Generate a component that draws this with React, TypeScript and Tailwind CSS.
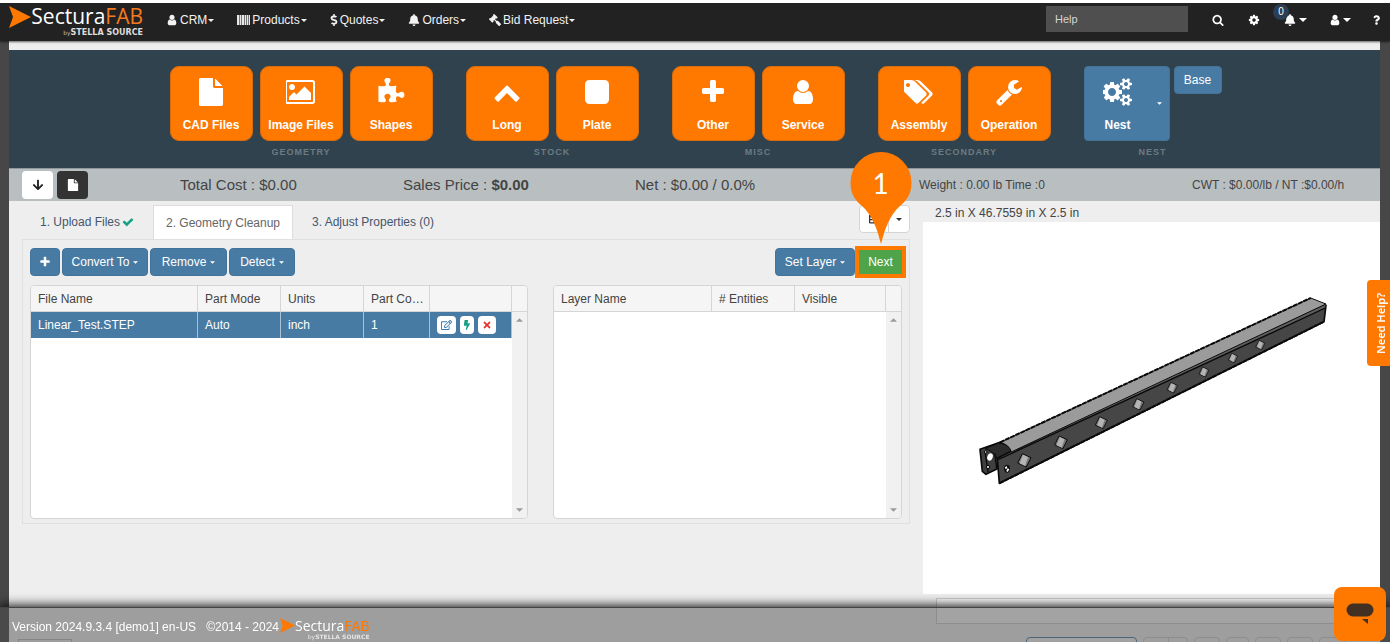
import React from "react";
import {
  FaArrowDown,
  FaBell,
  FaBolt,
  FaDollarSign,
  FaGavel,
  FaQuestion,
  FaRegEdit,
  FaTable,
  FaTimes,
} from "react-icons/fa";

const PATHS = {
  plus: "M1600 736v192q0 40-28 68t-68 28h-416v416q0 40-28 68t-68 28h-192q-40 0-68-28t-28-68v-416h-416q-40 0-68-28t-28-68v-192q0-40 28-68t68-28h416v-416q0-40 28-68t68-28h192q40 0 68 28t28 68v416h416q40 0 68 28t28 68z",
  user: "M1536 1399q0 109-62.5 187t-150.5 78h-854q-88 0-150.5-78t-62.5-187q0-85 8.5-160.5t31.5-152 58.5-131 94-89 134.5-34.5q131 128 313 128t313-128q76 0 134.5 34.5t94 89 58.5 131 31.5 152 8.5 160.5zm-256-887q0 159-112.5 271.5t-271.5 112.5-271.5-112.5-112.5-271.5 112.5-271.5 271.5-112.5 271.5 112.5 112.5 271.5z",
  check:
    "M1671 566q0 40-28 68l-724 724-136 136q-28 28-68 28t-68-28l-136-136-362-362q-28-28-28-68t28-68l136-136q28-28 68-28t68 28l294 295 656-657q28-28 68-28t68 28l136 136q28 28 28 68z",
  search:
    "M1216 832q0-185-131.5-316.5t-316.5-131.5-316.5 131.5-131.5 316.5 131.5 316.5 316.5 131.5 316.5-131.5 131.5-316.5zm512 832q0 52-38 90t-90 38q-54 0-90-38l-343-342q-179 124-399 124-143 0-273.5-55.5t-225-150-150-225-55.5-273.5 55.5-273.5 150-225 225-150 273.5-55.5 273.5 55.5 225 150 150 225 55.5 273.5q0 220-124 399l343 343q37 37 37 90z",
  cog: "M1152 896q0-106-75-181t-181-75-181 75-75 181 75 181 181 75 181-75 75-181zm512-109v222q0 12-8 23t-20 13l-185 28q-19 54-39 91 35 50 107 138 10 12 10 25t-9 23q-27 37-99 108t-94 71q-12 0-26-9l-138-108q-44 23-91 38-16 136-29 186-7 28-36 28h-222q-14 0-24.5-8.5t-11.5-21.5l-28-184q-49-16-90-37l-141 107q-10 9-25 9-14 0-25-11-126-114-165-168-7-10-7-23 0-12 8-23 15-21 51-66.5t54-70.5q-27-50-41-99l-183-27q-13-2-21-12.5t-8-23.5v-222q0-12 8-23t19-13l186-28q14-46 39-92-40-57-107-138-10-12-10-24 0-10 9-23 26-36 98.5-107.5t94.5-71.5q13 0 26 10l138 107q44-23 91-38 16-136 29-186 7-28 36-28h222q14 0 24.5 8.5t11.5 21.5l28 184q49 16 90 37l142-107q9-9 24-9 13 0 25 10 129 119 165 170 7 8 7 22 0 12-8 23-15 21-51 66.5t-54 70.5q26 50 41 98l183 28q13 2 21 12.5t8 23.5z",
  wrench:
    "M448 1472q0-26-19-45t-45-19-45 19-19 45 19 45 45 19 45-19 19-45zm644-420l-682 682q-37 37-90 37-52 0-91-37l-106-108q-38-36-38-90 0-53 38-91l681-681q39 98 114.5 173.5t173.5 114.5zm634-435q0 39-23 106-47 134-164.5 217.5t-258.5 83.5q-185 0-316.5-131.5t-131.5-316.5 131.5-316.5 316.5-131.5q58 0 121.5 16.5t107.5 46.5q16 11 16 28t-16 28l-293 169v224l193 107q5-3 79-48.5t135.5-81 70.5-35.5q15 0 23.5 10t8.5 25z",
  tags: "M384 448q0-53-37.5-90.5t-90.5-37.5-90.5 37.5-37.5 90.5 37.5 90.5 90.5 37.5 90.5-37.5 37.5-90.5zm1067 576q0 53-37 90l-491 492q-39 37-91 37-53 0-90-37l-715-716q-38-37-64.5-101t-26.5-117v-416q0-52 38-90t90-38h416q53 0 117 26.5t102 64.5l715 714q37 39 37 91zm384 0q0 53-37 90l-491 492q-39 37-91 37-36 0-59-14t-53-45l470-470q37-37 37-90 0-52-37-91l-715-714q-38-38-102-64.5t-117-26.5h224q53 0 117 26.5t102 64.5l715 714q37 39 37 91z",
  file: "M1152 512v-472q22 14 36 28l408 408q14 14 28 36h-472zm-128 32q0 40 28 68t68 28h544v1056q0 40-28 68t-68 28h-1344q-40 0-68-28t-28-68v-1600q0-40 28-68t68-28h800v544z",
  image:
    "M576 576q0 80-56 136t-136 56-136-56-56-136 56-136 136-56 136 56 56 136zm1024 384v448h-1408v-192l320-320 160 160 512-512zm96-704h-1600q-13 0-22.5 9.5t-9.5 22.5v1216q0 13 9.5 22.5t22.5 9.5h1600q13 0 22.5-9.5t9.5-22.5v-1216q0-13-9.5-22.5t-22.5-9.5zm160 32v1216q0 66-47 113t-113 47h-1600q-66 0-113-47t-47-113v-1216q0-66 47-113t113-47h1600q66 0 113 47t47 113z",
  chevron:
    "M1683 1331l-166 165q-19 19-45 19t-45-19l-531-531-531 531q-19 19-45 19t-45-19l-166-165q-19-19-19-45.5t19-45.5l742-741q19-19 45-19t45 19l742 741q19 19 19 45.5t-19 45.5z",
  puzzle:
    "M1755 1083q0 81-44.5 135t-123.5 54q-41 0-77.5-17.5t-59-38-56.5-38-71-17.5q-110 0-110 124 0 39 16 115t15 115v5q-22 0-33 1-34 3-97.5 11.5t-115.5 13.5-98 5q-61 0-103-26.5t-42-83.5q0-37 17.5-71t38-56.5 38-59 17.5-77.5q0-79-54-123.5t-135-44.5q-84 0-143 45.5t-59 127.5q0 43 15 83t33.5 64.5 33.5 53 15 50.5q0 45-46 89-37 35-117 35-95 0-245-24-9-2-27.5-4t-27.5-4l-13-2q-1 0-3-1-2 0-2-1v-1024q2 1 17.5 3.5t34 5 21.5 3.5q150 24 245 24 80 0 117-35 46-44 46-89 0-22-15-50.5t-33.5-53-33.5-64.5-15-83q0-82 59-127.5t144-45.5q80 0 134 44.5t54 123.5q0 41-17.5 77.5t-38 59-38 56.5-17.5 71q0 57 42 83.5t103 26.5q64 0 180-15t163-17v2q-1 2-3.5 17.5t-5 34-3.5 21.5q-24 150-24 245 0 80 35 117 44 46 89 46 22 0 50.5-15t53-33.5 64.5-33.5 83-15q82 0 127.5 59t45.5 143z",
  square:
    "M1664 416v960q0 119-84.500 203.500t-203.500 84.500h-960q-119 0-203.500-84.500t-84.500-203.500v-960q0-119 84.500-203.500t203.500-84.500h960q119 0 203.500 84.500t84.500 203.500z",
  cogs: "M832 896q0-106-75-181t-181-75-181 75-75 181 75 181 181 75 181-75 75-181zm768 512q0-52-38-90t-90-38-90 38-38 90q0 53 37.5 90.5t90.5 37.5 90.5-37.5 37.5-90.5zm0-1024q0-52-38-90t-90-38-90 38-38 90q0 53 37.5 90.5t90.5 37.5 90.5-37.5 37.5-90.5zm-384 421v185q0 10-7 19.5t-16 10.5l-155 24q-11 35-32 76 34 48 90 115 7 11 7 20 0 12-7 19-23 30-82.5 89.5t-78.5 59.5q-11 0-21-7l-115-90q-37 19-77 31-11 108-23 155-7 24-30 24h-186q-11 0-20-7.5t-10-17.5l-23-153q-34-10-75-31l-118 89q-7 7-20 7-11 0-21-8-144-133-144-160 0-9 7-19 10-14 41-53t47-61q-23-44-35-82l-152-24q-10-1-17-9.5t-7-19.5v-185q0-10 7-19.5t16-10.5l155-24q11-35 32-76-34-48-90-115-7-11-7-20 0-12 7-20 22-30 82-89t79-59q11 0 21 7l115 90q34-18 77-32 11-108 23-154 7-24 30-24h186q11 0 20 7.5t10 17.5l23 153q34 10 75 31l118-89q8-7 20-7 11 0 21 8 144 133 144 160 0 8-7 19-12 16-42 54t-45 60q23 48 34 82l152 23q10 2 17 10.5t7 19.5zm640 533v140q0 16-149 31-12 27-30 52 51 113 51 138 0 4-4 7-122 71-124 71-8 0-46-47t-52-68q-20 2-30 2t-30-2q-14 21-52 68t-46 47q-2 0-124-71-4-3-4-7 0-25 51-138-18-25-30-52-149-15-149-31v-140q0-16 149-31 13-29 30-52-51-113-51-138 0-4 4-7 4-2 35-20t59-34 30-16q8 0 46 46.5t52 67.5q20-2 30-2t30 2q51-71 92-112l6-2q4 0 124 70 4 3 4 7 0 25-51 138 17 23 30 52 149 15 149 31zm0-1024v140q0 16-149 31-12 27-30 52 51 113 51 138 0 4-4 7-122 71-124 71-8 0-46-47t-52-68q-20 2-30 2t-30-2q-14 21-52 68t-46 47q-2 0-124-71-4-3-4-7 0-25 51-138-18-25-30-52-149-15-149-31v-140q0-16 149-31 13-29 30-52-51-113-51-138 0-4 4-7 4-2 35-20t59-34 30-16q8 0 46 46.5t52 67.5q20-2 30-2t30 2q51-71 92-112l6-2q4 0 124 70 4 3 4 7 0 25-51 138 17 23 30 52 149 15 149 31z",
};

type IconName = keyof typeof PATHS;

const WIDE: IconName[] = ["image", "tags", "cogs"];

function Icon({ name, className }: { name: IconName; className: string }) {
  const w = WIDE.includes(name) ? 1920 : 1792;
  return (
    <svg viewBox={`0 0 ${w} 1792`} fill="currentColor" className={className} aria-hidden="true">
      <path d={PATHS[name]} />
    </svg>
  );
}

function Barcode() {
  return (
    <svg viewBox="0 0 13 10" className="h-[10px] w-[13px]" fill="#e8e8e8" aria-hidden="true">
      <rect width="13" height="10" fill="#777" />
      <path d="M0 0h2v10H0zM3 0h1v10H3zM5 0h2v10H5zM8 0h1v10H8zM10 0h1v10h-1zM12 0h1v10h-1z" />
    </svg>
  );
}

function Caret({ className = "h-[3px] w-[6px]" }: { className?: string }) {
  return (
    <svg viewBox="0 0 8 4" fill="currentColor" className={className} aria-hidden="true">
      <path d="M0 0h8L4 4z" />
    </svg>
  );
}

function Arrowhead({ className }: { className: string }) {
  return (
    <svg viewBox="0 0 22 22" className={className} aria-hidden="true">
      <path d="M0 0L22 11 0 22 4 11z" fill="#ff7800" />
    </svg>
  );
}

function NavItem({ icon, label }: { icon: React.ReactNode; label: string }) {
  return (
    <button type="button" className="flex items-center gap-[2px] text-xs text-[#f2f2f2]">
      {icon}
      <span className="flex items-center gap-px">
        {label}
        <Caret />
      </span>
    </button>
  );
}

function Tile({ icon, label }: { icon: IconName; label: string }) {
  return (
    <button
      type="button"
      className="flex h-[75px] w-[83px] flex-col items-center gap-[11px] rounded-[9px] border border-[#d96c0d] bg-[#ff7800] pt-[11px] text-xs font-bold whitespace-nowrap text-white"
    >
      <Icon name={icon} className="h-7 w-[30px]" />
      {label}
    </button>
  );
}

function Group({ label, children }: { label: string; children: React.ReactNode }) {
  return (
    <section className="flex flex-col items-center gap-[5px]">
      <div className="flex items-start gap-[7px]">{children}</div>
      <h2 className="text-[9px] leading-3 font-bold tracking-[1px] text-[#6d7b83]">{label}</h2>
    </section>
  );
}

function BlueButton({ children, className }: { children: React.ReactNode; className: string }) {
  return (
    <button
      type="button"
      className={`flex h-7 items-center justify-center gap-1 rounded border border-[#44739a] bg-[#487ba3] text-xs whitespace-nowrap text-white ${className}`}
    >
      {children}
    </button>
  );
}

function ScrollMark({ down = false }: { down?: boolean }) {
  return <Caret className={down ? "h-1 w-[7px] text-[#9a9a9a]" : "h-1 w-[7px] rotate-180 text-[#9a9a9a]"} />;
}

function Head({ children }: { children?: React.ReactNode }) {
  return (
    <th className="h-[26px] overflow-hidden border-r border-b border-[#d5d5d5] bg-[#f5f5f5] pr-px pl-[7px] text-left font-normal text-ellipsis whitespace-nowrap last:border-r-0">
      {children}
    </th>
  );
}

function Cell({ children }: { children?: React.ReactNode }) {
  return <td className="h-[26px] border-r border-[#a9c0d3] bg-[#487ba3] px-[7px] text-white">{children}</td>;
}

const HOLES = [
  [193, 541, 20],
  [303, 487, 19],
  [424, 428, 18],
  [535, 373, 17],
  [637, 323, 16],
  [732, 276, 15],
  [819, 234, 14],
  [901, 195, 14],
];

function Beam() {
  return (
    <svg viewBox="54 45 1056 570" className="h-[190px] w-[352px]" role="img" aria-label="Part preview">
      <path d="M60 508L120 487 158 508 120 545 112 566 78 583 67 574z" fill="#3f3f3f" stroke="#0a0a0a" strokeWidth="5" strokeLinejoin="round" />
      <path d="M116 489Q150 492 154 514L112 536Q98 512 75 506z" fill="#2c2c2c" stroke="#0a0a0a" strokeWidth="3" />
      <path d="M75 514L84 576M104 520L110 565" stroke="#0a0a0a" strokeWidth="4" />
      <path d="M112 535L154 514 1090 74 1098 76 1092 125 118 610z" fill="#464646" stroke="#0a0a0a" strokeWidth="5" strokeLinejoin="round" />
      <path d="M120 487L1052 54 1098 72 154 516Q148 494 120 487z" fill="#9b9b9b" stroke="#0a0a0a" strokeWidth="3" strokeLinejoin="round" />
      <path d="M116 535L154 517 1096 75 1096 82z" fill="#5e5e5e" />
      <path d="M112 540L1096 84" stroke="#0a0a0a" strokeWidth="4" />
      <path d="M120 487L1052 54" stroke="#0a0a0a" strokeWidth="6" strokeDasharray="14 3" />
      <path d="M118 610L1092 125" stroke="#0a0a0a" strokeWidth="6" strokeDasharray="14 3" />
      <ellipse cx="90" cy="531" rx="8" ry="11" fill="#fff" transform="rotate(20 90 531)" />
      <circle cx="77" cy="516" r="4" fill="#ccc" stroke="#0a0a0a" strokeWidth="3" />
      <circle cx="84" cy="561" r="5" fill="#ccc" stroke="#0a0a0a" strokeWidth="3" />
      <ellipse cx="141" cy="566" rx="9" ry="12" fill="#111" />
      <path d="M135 562l5-4 2 7-6 2zM143 565l5 3-5 8-4-3z" fill="#fff" />
      {HOLES.map(([x, y, r]) => (
        <g key={x} transform={`translate(${x} ${y}) scale(${r / 20})`}>
          <path d="M-6-20L20-8 6 20-20 8z" fill="#777" stroke="#0a0a0a" strokeWidth="3" />
          <path d="M-4-17L11-10 2 17-14 9z" fill="#b4b4b4" />
        </g>
      ))}
    </svg>
  );
}

function Pin() {
  return (
    <div className="pointer-events-none absolute bottom-full left-1/2 z-20 mb-[6px] h-[92px] w-[62px] -translate-x-1/2">
      <svg viewBox="0 0 62 92" className="h-full w-full" aria-hidden="true">
        <path d="M31 0A30.500 30.500 0 0 1 61.500 30.500C61.500 42 57 48 50 54C40 63 35 76 31 92C27 76 22 63 12 54C5 48 .5 42 .5 30.500A30.500 30.500 0 0 1 31 0z" fill="#ff7800" />
      </svg>
      <span className="absolute inset-x-0 top-0 text-center font-['Lato',sans-serif] text-[28px] leading-[62px] text-white">1</span>
    </div>
  );
}

export default function App() {
  return (
    <div className="flex h-screen flex-col overflow-hidden bg-[#474747] font-['Liberation_Sans',Arial,sans-serif] text-xs text-[#444]">
      <header className="relative z-10 flex h-[41px] shrink-0 items-center border-t-3 border-white bg-[#222] pr-[10px] pb-1 pl-[9px] shadow-[0_1px_2px_rgba(0,0,0,0.6)]">
        <a href="#home" className="mr-[23px] flex items-start gap-[2px] text-white">
          <Arrowhead className="mt-[3px] h-[22px] w-[22px]" />
          <span className="flex w-[110px] flex-col items-end">
            <span className="font-['Open_Sans',sans-serif] text-[21px] leading-[26px] whitespace-nowrap">
              Sectura<span className="font-medium text-[#f47a20]">FAB</span>
            </span>
            <span className="flex items-baseline font-['DejaVu_Sans',sans-serif] text-[8px] leading-[8px] whitespace-nowrap text-[#ddd]">
              <span className="text-[6px] text-[#bbb]">by</span>
              <span className="font-bold">STELLA SOURCE</span>
            </span>
          </span>
        </a>
        <nav className="flex flex-1 items-center gap-[23px]">
          <NavItem icon={<Icon name="user" className="h-3 w-3" />} label="CRM" />
          <NavItem icon={<Barcode />} label="Products" />
          <NavItem icon={<FaDollarSign className="h-[12px] w-[8px]" />} label="Quotes" />
          <NavItem icon={<FaBell className="h-[12px] w-[12px]" />} label="Orders" />
          <NavItem icon={<FaGavel className="h-[12px] w-[12px] -scale-x-100" />} label="Bid Request" />
        </nav>
        <input
          aria-label="Help"
          placeholder="Help"
          className="mr-6 mb-[2px] h-[26px] w-[142px] bg-[#4f4f4f] px-[9px] pb-px text-[11px] text-white placeholder:text-[#d5d5d5]"
        />
        <div className="flex items-center text-white">
          <button type="button" aria-label="Search" className="mr-6">
            <Icon name="search" className="h-3 w-3" />
          </button>
          <button type="button" aria-label="Settings" className="mr-6">
            <Icon name="cog" className="h-3 w-3" />
          </button>
          <button type="button" aria-label="Notifications" className="relative mr-[22px] flex items-center gap-[3px]">
            <FaBell className="h-3 w-3" />
            <Caret className="h-[4px] w-[8px]" />
            <span className="absolute -top-[10px] -left-[11px] h-4 w-4 rounded-full bg-[#2b3e54] text-center text-[10px] leading-4">0</span>
          </button>
          <button type="button" aria-label="Account" className="mr-[22px] flex items-center gap-[2px]">
            <Icon name="user" className="h-3 w-3" />
            <Caret className="h-[4px] w-[8px]" />
          </button>
          <button type="button" aria-label="Support">
            <FaQuestion className="h-[10px] w-[7px]" />
          </button>
        </div>
      </header>

      <div className="mr-[10px] ml-[9px] shrink-0 bg-[#eee] pt-[9px]">
        <div className="flex h-[118px] items-start justify-center gap-[33px] bg-[#2f424d] pt-4 pl-[2px]">
          <Group label="GEOMETRY">
            <Tile icon="file" label="CAD Files" />
            <Tile icon="image" label="Image Files" />
            <Tile icon="puzzle" label="Shapes" />
          </Group>
          <Group label="STOCK">
            <Tile icon="chevron" label="Long" />
            <Tile icon="square" label="Plate" />
          </Group>
          <Group label="MISC">
            <Tile icon="plus" label="Other" />
            <Tile icon="user" label="Service" />
          </Group>
          <Group label="SECONDARY">
            <Tile icon="tags" label="Assembly" />
            <Tile icon="wrench" label="Operation" />
          </Group>
          <Group label="NEST">
            <div className="flex items-start gap-1">
              <div className="flex h-[75px] w-[86px] rounded border border-[#44739a] bg-[#487ba3] text-white">
                <button type="button" className="flex w-[66px] flex-col items-center gap-[11px] pt-[11px] font-bold">
                  <Icon name="cogs" className="h-7 w-[30px]" />
                  Nest
                </button>
                <button type="button" aria-label="Nest options" className="flex flex-1 items-center justify-center">
                  <Caret className="h-[3px] w-[5px]" />
                </button>
              </div>
              <BlueButton className="w-12">Base</BlueButton>
            </div>
          </Group>
        </div>

        <div className="grid h-[33px] grid-cols-[171fr_223fr_232fr_284fr_273fr_188fr] items-center border-t border-[#8f989c] bg-[#b9bfc1] whitespace-nowrap">
          <div className="flex gap-1 pl-[13px]">
            <button type="button" aria-label="Download" className="flex h-7 w-[31px] items-center justify-center rounded bg-white text-[#222]">
              <FaArrowDown className="h-3 w-3" />
            </button>
            <button type="button" aria-label="Document" className="flex h-7 w-[31px] items-center justify-center rounded bg-[#333] text-white">
              <Icon name="file" className="h-3 w-3" />
            </button>
          </div>
          <span className="text-[15px]">Total Cost : $0.00</span>
          <span className="text-[15px]">
            Sales Price : <b>$0.00</b>
          </span>
          <span className="text-[15px]">Net : $0.00 / 0.0%</span>
          <span>Weight : 0.00 lb Time :0</span>
          <span>CWT : $0.00/lb / NT :$0.00/h</span>
        </div>
      </div>

      <main className="mr-[10px] ml-[9px] grid flex-1 grid-cols-[2fr_1fr] bg-[#eee]">
        <div className="px-[13px] pt-1">
          <div className="flex items-start justify-between">
            <div role="tablist" className="flex h-[34px] text-[#44566c]">
              <button type="button" role="tab" aria-selected="false" className="flex w-[131px] items-center gap-[2px] pl-[18px]">
                1. Upload Files
                <Icon name="check" className="h-3 w-3 text-[#16a085]" />
              </button>
              <button type="button" role="tab" aria-selected="true" className="w-[140px] border border-b-0 border-[#ddd] bg-white text-[#666]">
                2. Geometry Cleanup
              </button>
              <button type="button" role="tab" aria-selected="false" className="w-[160px]">
                3. Adjust Properties (0)
              </button>
            </div>
            <div className="flex h-7 w-[51px] rounded border border-[#d5d5d5] bg-white text-[#333]">
              <button type="button" aria-label="Grid view" className="flex flex-1 items-center justify-center border-r border-[#d5d5d5]">
                <FaTable className="h-[10px] w-3" />
              </button>
              <button type="button" aria-label="View options" className="flex w-5 items-center justify-center">
                <Caret />
              </button>
            </div>
          </div>

          <div className="border border-[#e0e0e0] px-[7px] pt-2 pb-1">
            <div className="mb-[9px] flex items-center gap-[2px]">
              <BlueButton className="w-[30px]">
                <Icon name="plus" className="h-3 w-3" />
              </BlueButton>
              <BlueButton className="w-[86px]">
                Convert To <Caret className="h-[3px] w-[5px]" />
              </BlueButton>
              <BlueButton className="w-[77px]">
                Remove <Caret className="h-[3px] w-[5px]" />
              </BlueButton>
              <BlueButton className="w-[66px]">
                Detect <Caret className="h-[3px] w-[5px]" />
              </BlueButton>
              <BlueButton className="ml-auto w-20">
                Set Layer <Caret className="h-[3px] w-[5px]" />
              </BlueButton>
              <div className="relative ml-[2px]">
                <button type="button" className="block h-6 w-[43px] bg-[#4fa44a] text-white ring-4 ring-[#ff7800]">
                  Next
                </button>
                <Pin />
              </div>
            </div>

            <div className="grid grid-cols-[498fr_349fr] gap-[25px]">
              <div className="flex h-[234px] flex-col overflow-hidden rounded border border-[#d5d5d5] bg-white">
                <table className="w-full table-fixed border-separate border-spacing-0">
                  <colgroup>
                    <col />
                    <col className="w-[83px]" />
                    <col className="w-[83px]" />
                    <col className="w-[66px]" />
                    <col className="w-[82px]" />
                    <col className="w-[15px]" />
                  </colgroup>
                  <thead>
                    <tr>
                      <Head>File Name</Head>
                      <Head>Part Mode</Head>
                      <Head>Units</Head>
                      <Head>Part Count</Head>
                      <Head />
                      <Head />
                    </tr>
                  </thead>
                  <tbody>
                    <tr>
                      <Cell>Linear_Test.STEP</Cell>
                      <Cell>Auto</Cell>
                      <Cell>inch</Cell>
                      <Cell>1</Cell>
                      <Cell>
                        <div className="flex gap-1">
                          <button type="button" aria-label="Edit" className="flex h-[18px] w-[19px] items-center justify-center rounded bg-white text-[#3a78b0]">
                            <FaRegEdit className="h-[10px] w-[11px]" />
                          </button>
                          <button type="button" aria-label="Process" className="flex h-[18px] w-[14px] items-center justify-center rounded bg-white text-[#16a085]">
                            <FaBolt className="h-[10px] w-2" />
                          </button>
                          <button type="button" aria-label="Delete" className="flex h-[18px] w-[18px] items-center justify-center rounded bg-white text-[#e2352c]">
                            <FaTimes className="h-[10px] w-[10px]" />
                          </button>
                        </div>
                      </Cell>
                      <td className="bg-[#f1f1f1] pt-[6px] pl-1 align-top">
                        <ScrollMark />
                      </td>
                    </tr>
                  </tbody>
                </table>
                <div className="flex w-[15px] flex-1 items-end justify-center self-end bg-[#f1f1f1] pb-[6px]">
                  <ScrollMark down />
                </div>
              </div>

              <div className="flex h-[234px] flex-col overflow-hidden rounded border border-[#d5d5d5] bg-white">
                <table className="w-full table-fixed border-separate border-spacing-0">
                  <colgroup>
                    <col />
                    <col className="w-[83px]" />
                    <col className="w-[91px]" />
                    <col className="w-[15px]" />
                  </colgroup>
                  <thead>
                    <tr>
                      <Head>Layer Name</Head>
                      <Head># Entities</Head>
                      <Head>Visible</Head>
                      <Head />
                    </tr>
                  </thead>
                </table>
                <div className="flex w-[15px] flex-1 flex-col items-center justify-between self-end bg-[#f1f1f1] py-[6px]">
                  <ScrollMark />
                  <ScrollMark down />
                </div>
              </div>
            </div>
          </div>
          <div className="mt-[115px] -ml-1 h-6 w-[54px] border border-[#bbb]" />
        </div>

        <div>
          <p className="h-[21px] pl-3 leading-6">2.5 in X 46.7559 in X 2.5 in</p>
          <div className="flex h-[372px] items-center justify-center bg-white pb-9 pl-1">
            <Beam />
          </div>
          <div className="mt-1 ml-[13px] h-[26px] border border-[#ccc] bg-[#f8f8f8]" />
          <div className="mt-[13px] flex h-7 gap-[6px] pl-[103px]">
            <div className="w-[111px] rounded border border-[#487ba3] bg-[#f4f4f4]" />
            <div className="flex w-[45px] rounded border border-[#ccc]">
              <div className="w-[25px] border-r border-[#ccc]" />
            </div>
            <div className="w-[26px] rounded border border-[#ccc]" />
            <div className="w-[23px] rounded border border-[#ccc]" />
            <div className="w-[26px] rounded border border-[#ccc]" />
            <div className="w-[26px] rounded border border-[#ccc]" />
            <div className="w-[26px] rounded border border-[#ccc]" />
          </div>
        </div>
      </main>

      <footer className="fixed inset-x-0 bottom-0 z-10 flex h-[35px] items-center border-t border-[#444] bg-[#4d4d4d]/50 pt-[3px] pl-3 text-white shadow-[0_0_12px_1px_#000]">
        <span className="mr-[10px]">Version 2024.9.3.4 [demo1] en-US</span>
        <span className="mr-px">©2014 - 2024</span>
        <a href="#home" className="flex items-start pt-1">
          <Arrowhead className="h-[15px] w-[15px]" />
          <span className="flex flex-col items-end">
            <span className="font-['Open_Sans',sans-serif] text-[14px] leading-4">
              Sectura<span className="font-medium text-[#ff7800]">FAB</span>
            </span>
            <span className="font-['DejaVu_Sans',sans-serif] text-[6px] leading-[6px] text-[#e5e5e5]">
              by<b>STELLA SOURCE</b>
            </span>
          </span>
        </a>
      </footer>

      <button
        type="button"
        className="fixed top-[280px] right-0 flex h-[86px] w-[23px] rotate-180 items-center justify-center rounded-r bg-[#ff7800] pr-[5px] font-['Noto_Sans',sans-serif] text-[11px] font-semibold whitespace-nowrap text-white [writing-mode:vertical-rl]"
      >
        Need Help?
      </button>
      <button
        type="button"
        aria-label="Open chat"
        className="fixed right-1 bottom-px z-20 flex h-[54px] w-[52px] items-center justify-center rounded-lg bg-[#ff7800]"
      >
        <svg viewBox="0 0 28 22" className="h-[22px] w-7" aria-hidden="true">
          <rect x="0.500" y="0.500" width="27" height="13" rx="6.500" fill="#433023" />
          <path d="M16 16h6v5z" fill="#433023" />
        </svg>
      </button>
    </div>
  );
}
